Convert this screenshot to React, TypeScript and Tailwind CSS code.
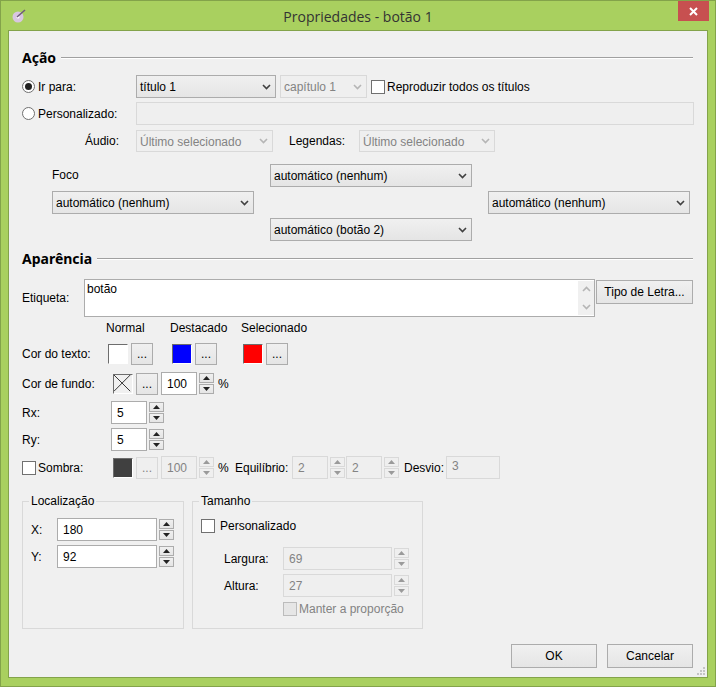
import React from "react";

const font = "font-['Liberation_Sans',sans-serif] text-[12px]";

const Chevron = ({ disabled }: { disabled?: boolean }) => (
  <svg width="9" height="6" viewBox="0 0 9 6" className="shrink-0">
    <path
      d="M1 1 L4.5 4.5 L8 1"
      fill="none"
      stroke={disabled ? "#b5b5b5" : "#404040"}
      strokeWidth="1.6"
    />
  </svg>
);

const Select = ({
  value,
  width,
  disabled,
}: {
  value: string;
  width: string;
  disabled?: boolean;
}) => (
  <div
    className={`${width} h-[23px] shrink-0 flex items-center justify-between pl-[3px] pr-[4px] border ${
      disabled
        ? "border-[#d9d9d9] bg-[#efefef] text-[#838383]"
        : "border-[#acacac] bg-gradient-to-b from-[#f0f0f0] to-[#e5e5e5] text-black"
    }`}
  >
    <span className="whitespace-nowrap pt-[1px]">{value}</span>
    <Chevron disabled={disabled} />
  </div>
);

const Radio = ({ checked }: { checked?: boolean }) => (
  <span className="w-[13px] h-[13px] shrink-0 rounded-full border border-[#707070] bg-white flex items-center justify-center">
    {checked && <span className="w-[7px] h-[7px] rounded-full bg-[#222]" />}
  </span>
);

const Check = ({ disabled }: { disabled?: boolean }) => (
  <span
    className={`block w-[14px] h-[14px] shrink-0 border ${
      disabled ? "border-[#bcbcbc] bg-[#e6e6e6]" : "border-[#707070] bg-white"
    }`}
  />
);

const Arrow = ({ up, disabled }: { up?: boolean; disabled?: boolean }) => (
  <div
    className={`h-[10px] flex items-center justify-center border ${
      disabled
        ? "border-[#d9d9d9] bg-[#efefef]"
        : "border-[#acacac] bg-gradient-to-b from-[#f0f0f0] to-[#e5e5e5]"
    }`}
  >
    <svg width="7" height="4" viewBox="0 0 7 4">
      <path
        d={up ? "M0 4 L3.5 0 L7 4 Z" : "M0 0 L3.5 4 L7 0 Z"}
        fill={disabled ? "#9a9a9a" : "#222"}
      />
    </svg>
  </div>
);

const Spin = ({
  value,
  width,
  disabled,
}: {
  value: string;
  width: string;
  disabled?: boolean;
}) => (
  <div className="flex items-center shrink-0">
    <div
      className={`${width} h-[23px] flex items-center pl-[5px] border ${
        disabled
          ? "border-[#d9d9d9] bg-[#efefef] text-[#838383]"
          : "border-[#acacac] bg-white text-black"
      }`}
    >
      {value}
    </div>
    <div className="w-[15px] ml-[2px] flex flex-col gap-[1px]">
      <Arrow up disabled={disabled} />
      <Arrow disabled={disabled} />
    </div>
  </div>
);

const Dots = ({ disabled }: { disabled?: boolean }) => (
  <div
    className={`w-[22px] h-[22px] shrink-0 flex items-center justify-center border ${
      disabled
        ? "border-[#d9d9d9] bg-[#efefef] text-[#838383]"
        : "border-[#acacac] bg-gradient-to-b from-[#f0f0f0] to-[#e5e5e5]"
    }`}
  >
    ...
  </div>
);

const Swatch = ({ color }: { color: string }) => (
  <div
    className={`w-[20px] h-[20px] shrink-0 border border-t-[#6d6d6d] border-l-[#6d6d6d] border-r-white border-b-white ${color}`}
  />
);

const Heading = ({ title }: { title: string }) => (
  <div className="flex items-center gap-[5px] h-[16px]">
    <span className="font-bold text-[14px] leading-none font-['Noto_Sans',sans-serif]">{title}</span>
    <div className="flex-1 h-[2px] border-t border-[#a0a0a0] bg-white" />
  </div>
);

const Button = ({ label, width }: { label: string; width: string }) => (
  <div
    className={`${width} h-[24px] flex items-center justify-center border border-[#acacac] bg-gradient-to-b from-[#f0f0f0] to-[#e5e5e5]`}
  >
    {label}
  </div>
);

const App = () => {
  return (
    <div
      className={`${font} w-[716px] h-[687px] flex flex-col bg-[#a9d05f] border border-[#83a34a] text-black`}
    >
      <div className="h-[29px] shrink-0 flex items-start relative">
        <svg width="16" height="16" viewBox="0 0 16 16" className="ml-[10px] mt-[7px]">
          <circle cx="7" cy="9" r="5.5" fill="#d8c6e0" />
          <circle cx="7" cy="9" r="1.5" fill="#fff" />
          <path d="M6 9 L14 2" stroke="#6e5a7a" strokeWidth="1.5" />
        </svg>
        <span className="absolute left-0 right-0 top-[7px] text-center text-[14px] leading-[18px] text-[#333] font-['Open_Sans',sans-serif]">
          Propriedades - botão 1
        </span>
        <div className="absolute right-[6px] top-0 w-[31px] h-[20px] bg-[#c75050] flex items-center justify-center">
          <svg width="9" height="9" viewBox="0 0 9 9">
            <path d="M1 1 L8 8 M8 1 L1 8" stroke="#fff" strokeWidth="2" />
          </svg>
        </div>
      </div>

      <div className="ml-[7px] mr-[7px] h-[648px] border border-[#83a34a] bg-[#f0f0f0] pl-[13px] pr-[14px] pt-[19px] flex flex-col relative">
        <Heading title="Ação" />

        <div className="flex items-center mt-[9px] h-[23px]">
          <Radio checked />
          <span className="ml-[3px] w-[98px] pt-[1px]">Ir para:</span>
          <Select value="título 1" width="w-[140px]" />
          <div className="ml-[4px]">
            <Select value="capítulo 1" width="w-[87px]" disabled />
          </div>
          <div className="ml-[4px]">
            <Check />
          </div>
          <span className="ml-[2px] pt-[1px]">Reproduzir todos os títulos</span>
        </div>

        <div className="flex items-center mt-[4px] h-[23px]">
          <Radio />
          <span className="ml-[3px] w-[98px] pt-[1px]">Personalizado:</span>
          <div className="flex-1 h-[23px] mr-[-1px] border border-[#d9d9d9] bg-[#efefef]" />
        </div>

        <div className="flex items-center mt-[5px] h-[22px]">
          <span className="ml-[63px] w-[51px]">Áudio:</span>
          <Select value="Último selecionado" width="w-[137px] !h-[22px]" disabled />
          <span className="ml-[16px] w-[70px]">Legendas:</span>
          <Select value="Último selecionado" width="w-[136px] !h-[22px]" disabled />
        </div>

        <div className="grid grid-cols-[202px_202px_202px] gap-x-[16px] ml-[30px] mt-[12px]">
          <div className="h-[22px] flex items-center">Foco</div>
          <Select value="automático (nenhum)" width="w-[202px]" />
          <div />
          <div className="mt-[4px]">
            <Select value="automático (nenhum)" width="w-[202px]" />
          </div>
          <div />
          <div className="mt-[4px]">
            <Select value="automático (nenhum)" width="w-[202px]" />
          </div>
          <div />
          <div className="mt-[4px]">
            <Select value="automático (botão 2)" width="w-[202px]" />
          </div>
          <div />
        </div>

        <div className="mt-[10px]">
          <Heading title="Aparência" />
        </div>

        <div className="flex items-start mt-[12px] h-[38px]">
          <span className="w-[62px] mt-[10px]">Etiqueta:</span>
          <div className="w-[511px] h-[38px] border border-[#acacac] bg-white pl-[2px] flex justify-between">
            <span className="leading-[18px]">botão</span>
            <div className="w-[16px] my-[1px] bg-[#f0f0f0] flex flex-col items-center justify-between py-[5px]">
              <svg width="9" height="6" viewBox="0 0 9 6">
                <path d="M1 5 L4.5 1.5 L8 5" fill="none" stroke="#b5b5b5" strokeWidth="1.6" />
              </svg>
              <Chevron disabled />
            </div>
          </div>
          <div className="ml-[1px] mt-[1px]">
            <Button label="Tipo de Letra..." width="w-[97px]" />
          </div>
        </div>

        <div className="flex h-[16px] mt-[3px] items-center">
          <span className="ml-[84px] w-[64px]">Normal</span>
          <span className="w-[71px]">Destacado</span>
          <span>Selecionado</span>
        </div>

        <div className="flex items-center h-[22px] mt-[7px]">
          <span className="w-[86px]">Cor do texto:</span>
          <Swatch color="bg-white" />
          <div className="ml-[3px] mr-[19px]">
            <Dots />
          </div>
          <Swatch color="bg-[#0000ff]" />
          <div className="ml-[3px] mr-[26px]">
            <Dots />
          </div>
          <Swatch color="bg-[#ff0000]" />
          <div className="ml-[3px]">
            <Dots />
          </div>
        </div>

        <div className="flex items-center h-[23px] mt-[7px]">
          <span className="w-[91px]">Cor de fundo:</span>
          <svg width="20" height="20" viewBox="0 0 20 20" className="shrink-0 bg-[#f0f0f0] border border-t-[#6d6d6d] border-l-[#6d6d6d] border-r-white border-b-white">
            <path d="M0 0 L18 18 M18 0 L0 18" stroke="#222" strokeWidth="1" />
          </svg>
          <div className="ml-[3px] mr-[3px]">
            <Dots />
          </div>
          <Spin value="100" width="w-[36px]" />
          <span className="ml-[4px]">%</span>
        </div>

        <div className="flex items-center h-[23px] mt-[6px]">
          <span className="w-[89px]">Rx:</span>
          <Spin value="5" width="w-[36px]" />
        </div>

        <div className="flex items-center h-[23px] mt-[4px]">
          <span className="w-[89px]">Ry:</span>
          <Spin value="5" width="w-[36px]" />
        </div>

        <div className="flex items-center h-[23px] mt-[5px]">
          <Check />
          <span className="ml-[2px] w-[75px] pt-[1px]">Sombra:</span>
          <Swatch color="bg-[#404040]" />
          <div className="ml-[3px] mr-[3px]">
            <Dots disabled />
          </div>
          <Spin value="100" width="w-[36px]" disabled />
          <span className="ml-[4px] w-[17px]">%</span>
          <span className="w-[57px]">Equilíbrio:</span>
          <Spin value="2" width="w-[36px]" disabled />
          <div className="ml-[1px]">
            <Spin value="2" width="w-[36px]" disabled />
          </div>
          <span className="ml-[5px] w-[42px]">Desvio:</span>
          <div className="w-[54px] h-[23px] border border-[#d9d9d9] bg-[#efefef] text-[#838383] pl-[5px]">
            3
          </div>
        </div>

        <div className="flex items-start gap-[8px] mt-[15px]">
          <fieldset className="w-[162px] h-[135px] border border-[#d9d9d9] pl-[8px] pr-[8px]">
            <legend className="px-[2px] -ml-[2px] h-[14px] leading-[14px]">Localização</legend>
            <div className="flex items-center h-[23px] mt-[10px]">
              <span className="w-[26px]">X:</span>
              <Spin value="180" width="w-[100px]" />
            </div>
            <div className="flex items-center h-[23px] mt-[4px]">
              <span className="w-[26px]">Y:</span>
              <Spin value="92" width="w-[100px]" />
            </div>
          </fieldset>
          <fieldset className="w-[231px] h-[135px] border border-[#d9d9d9] pl-[8px]">
            <legend className="px-[2px] -ml-[2px] h-[14px] leading-[14px]">Tamanho</legend>
            <div className="flex items-center h-[16px] mt-[10px]">
              <Check />
              <span className="ml-[5px]">Personalizado</span>
            </div>
            <div className="flex items-center h-[23px] mt-[13px] ml-[23px]">
              <span className="w-[59px]">Largura:</span>
              <Spin value="69" width="w-[109px]" disabled />
            </div>
            <div className="flex items-center h-[23px] mt-[4px] ml-[23px]">
              <span className="w-[59px]">Altura:</span>
              <Spin value="27" width="w-[109px]" disabled />
            </div>
            <div className="flex items-center h-[15px] mt-[4px] ml-[82px] text-[#838383]">
              <Check disabled />
              <span className="ml-[2px] whitespace-nowrap">Manter a proporção</span>
            </div>
          </fieldset>
        </div>

        <div className="flex justify-end gap-[10px] mt-[15px]">
          <Button label="OK" width="w-[86px]" />
          <Button label="Cancelar" width="w-[86px]" />
        </div>

        <svg width="9" height="9" viewBox="0 0 9 9" className="absolute right-[2px] bottom-[2px]">
          <path d="M7 1h2v2h-2z M4 4h2v2h-2z M7 4h2v2h-2z M1 7h2v2h-2z M4 7h2v2h-2z M7 7h2v2h-2z" fill="#c4c4c4" />
        </svg>
      </div>
    </div>
  );
};

export default App;
